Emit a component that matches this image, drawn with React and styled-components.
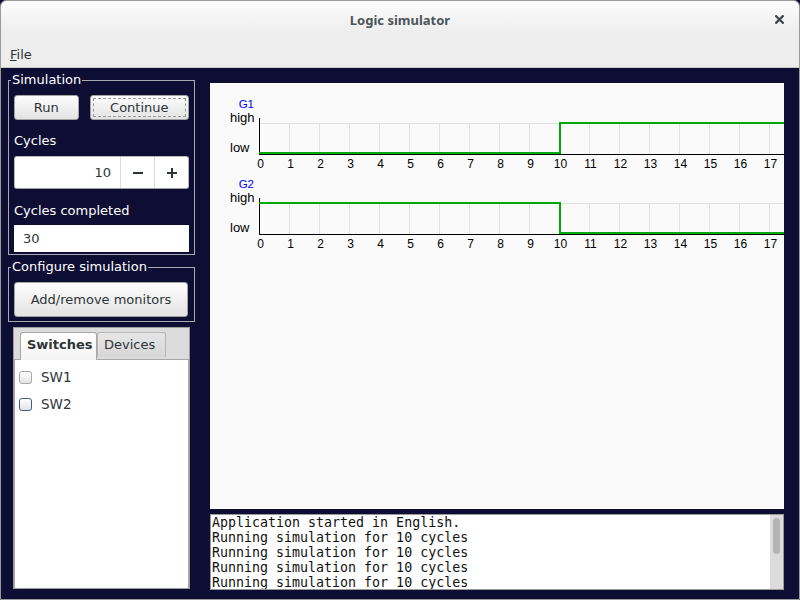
import styled, { createGlobalStyle } from 'styled-components';

const GlobalStyle = createGlobalStyle`
	html, body {
		margin: 0;
		padding: 0;
		background: #0e0e34;
	}
	body {
		font-family: "DejaVu Sans", sans-serif;
		font-size: 13px;
	}
`;

const Window = styled.div`
	width: 800px;
	height: 600px;
	box-sizing: border-box;
	border: 1px solid #9a9a9a;
	border-radius: 6px 6px 0 0;
	overflow: hidden;
	display: flex;
	flex-direction: column;
	background: #0e0e34;
`;

const TitleBar = styled.div`
	height: 35px;
	flex: none;
	display: flex;
	align-items: center;
	justify-content: center;
	position: relative;
	background: linear-gradient(#fcfcfc, #ededed 33px);
	font-family: "Noto Sans", sans-serif;
	font-weight: bold;
	font-size: 13px;
	color: #4b5459;
	padding-top: 2px;
	box-sizing: border-box;
`;

const CloseButton = styled.div`
	position: absolute;
	right: 15px;
	top: 14px;
	width: 9px;
	height: 9px;
	display: flex;
`;

const MenuBar = styled.div`
	height: 32px;
	flex: none;
	box-sizing: border-box;
	background: #ededed;
	border-bottom: 1px solid #cacaca;
	display: flex;
	align-items: center;
	padding: 6px 0 0 9px;
	color: #2e3436;
`;

const Main = styled.div`
	flex: 1;
	display: flex;
	min-height: 0;
`;

const LeftColumn = styled.div`
	width: 187px;
	margin-left: 7px;
	padding-top: 4px;
	display: flex;
	flex-direction: column;
`;

const Group = styled.fieldset`
	margin: ${(p) => p.$top || 0}px 0 0 0;
	padding: 7px 5px ${(p) => p.$bottom}px 5px;
	border: 1px solid #a9a9b2;
	width: 187px;
	box-sizing: border-box;
	min-width: 0;
	color: #fff;
	& legend {
		padding: 0 1px;
		margin-left: -3px;
		line-height: 16px;
		font-size: 13px;
	}
`;

const ButtonRow = styled.div`
	display: flex;
	gap: 11px;
`;

const Button = styled.button`
	width: ${(p) => p.$width}px;
	height: ${(p) => p.$height || 25}px;
	box-sizing: border-box;
	border: 1px solid #a4a4a4;
	border-radius: 3px;
	background: linear-gradient(#fdfdfd, #e3e3e3);
	font-family: "DejaVu Sans", sans-serif;
	font-size: 13px;
	color: #2e3436;
	padding: 0;
	outline: ${(p) => (p.$focused ? '1px dashed #9a9a9a' : 'none')};
	outline-offset: -4px;
`;

const Label = styled.div`
	margin-top: ${(p) => p.$top}px;
	line-height: 16px;
	color: #fff;
`;

const SpinBox = styled.div`
	margin-top: 7px;
	height: 33px;
	box-sizing: border-box;
	display: flex;
	background: #fff;
	border: 1px solid #b8b8b8;
	border-bottom-color: #a0a0a0;
	border-radius: 3px;
	color: #2e3436;
`;

const SpinValue = styled.div`
	flex: 1;
	text-align: right;
	padding-right: 9px;
	line-height: 31px;
`;

const SpinButton = styled.div`
	width: 33px;
	border-left: 1px solid #dcdcdc;
	display: flex;
	align-items: center;
	justify-content: center;
`;

const Entry = styled.div`
	margin-top: 6px;
	height: 27px;
	background: #fff;
	color: #2e3436;
	line-height: 27px;
	padding-left: 9px;
`;

const Notebook = styled.div`
	margin: 5px 0 0 5px;
	width: 177px;
	height: 262px;
	box-sizing: border-box;
	border: 1px solid #9c9c9c;
	background: #dcdcdc;
	display: flex;
	flex-direction: column;
`;

const TabBar = styled.div`
	height: 31px;
	box-sizing: border-box;
	padding: 4px 0 0 6px;
	display: flex;
	align-items: flex-start;
`;

const Tab = styled.div`
	width: ${(p) => p.$width}px;
	height: ${(p) => (p.$active ? 28 : 25)}px;
	box-sizing: border-box;
	border: 1px solid ${(p) => (p.$active ? '#a6a6a6' : '#b6b6b6')};
	border-bottom: none;
	border-radius: 3px 3px 0 0;
	background: ${(p) => (p.$active ? 'linear-gradient(#ffffff, #f4f4f4)' : 'linear-gradient(#e6e6e6, #d6d6d6)')};
	font-weight: ${(p) => (p.$active ? 'bold' : 'normal')};
	color: #2e3436;
	line-height: 24px;
	padding-left: 6px;
	position: relative;
	z-index: 1;
`;

const Panel = styled.div`
	flex: 1;
	background: #fff;
	border: 1px solid #a6a6a6;
	border-bottom: none;
	padding: 3px 0 0 4px;
`;

const CheckRow = styled.div`
	height: 27px;
	display: flex;
	align-items: center;
	gap: 9px;
	color: #2e3436;
	font-size: 13.5px;
`;

const Check = styled.span`
	width: 13px;
	height: 13px;
	box-sizing: border-box;
	border: 1px solid ${(p) => (p.$focused ? '#3a6187' : '#a8a8a8')};
	border-radius: 3px;
	background: linear-gradient(#ffffff, #e4e4e4);
	margin-top: 1px;
`;

const RightColumn = styled.div`
	width: 574px;
	margin-left: 15px;
	padding-top: 15px;
	display: flex;
	flex-direction: column;
	gap: 5px;
`;

const Canvas = styled.div`
	height: 426px;
	background: #fafafa;
	overflow: hidden;
	& svg {
		display: block;
	}
`;

const Console = styled.div`
	height: 76px;
	box-sizing: border-box;
	border: 1px solid #9a9a9a;
	background: #fff;
	display: flex;
`;

const ConsoleText = styled.div`
	flex: 1;
	overflow: hidden;
	font-family: "DejaVu Sans Mono", monospace;
	font-size: 13.3px;
	line-height: 15px;
	color: #111;
	white-space: pre;
	padding-left: 1px;
`;

const ScrollTrack = styled.div`
	width: 13px;
	background: #dcdcdc;
	padding: 3px 3px 0 3px;
	box-sizing: border-box;
`;

const ScrollThumb = styled.div`
	height: 36px;
	border-radius: 4px;
	background: #b4b4b4;
`;

const STEP = 30;
const X0 = 49.5;
const WIDTH = 574;

const traces = [
	{ name: 'G1', path: 'M49,70 H350 V40 H574' },
	{ name: 'G2', path: 'M49,40 H350 V70 H574' },
];

const TraceChart = () => (
	<svg width={WIDTH} height={426} fontFamily="Liberation Sans, Arial, sans-serif">
		{traces.map((t, i) => (
			<g key={t.name} transform={`translate(0 ${i * 80})`}>
				{Array.from({ length: 17 }, (_, k) => (
					<line
						key={k}
						x1={X0 + STEP * (k + 1)}
						x2={X0 + STEP * (k + 1)}
						y1={40}
						y2={71}
						stroke="#e2e2e2"
						strokeWidth="1"
					/>
				))}
				<line x1={X0} x2={WIDTH} y1={40.5} y2={40.5} stroke="#e2e2e2" strokeWidth="1" />
				<line x1={X0} x2={X0} y1={35} y2={72} stroke="#000" strokeWidth="1" />
				<line x1={49} x2={WIDTH} y1={71.5} y2={71.5} stroke="#000" strokeWidth="1" />
				<path d={t.path} fill="none" stroke="#00aa00" strokeWidth="2" />
				<text x={44} y={24.5} fontSize="11.5" fill="#0000ff" textAnchor="end">
					{t.name}
				</text>
				<text x={20} y={38.5} fontSize="13" fill="#000">
					high
				</text>
				<text x={20} y={68.5} fontSize="13" fill="#000">
					low
				</text>
				{Array.from({ length: 18 }, (_, k) => (
					<text key={k} x={X0 + 1 + STEP * k} y={84.5} fontSize="12" fill="#000" textAnchor="middle">
						{k}
					</text>
				))}
			</g>
		))}
	</svg>
);

const Minus = () => (
	<svg width="10" height="10" viewBox="0 0 10 10">
		<rect x="0" y="4" width="10" height="2" fill="#2e3436" />
	</svg>
);

const Plus = () => (
	<svg width="10" height="10" viewBox="0 0 10 10">
		<rect x="0" y="4" width="10" height="2" fill="#2e3436" />
		<rect x="4" y="0" width="2" height="10" fill="#2e3436" />
	</svg>
);

const logLines = [
	'Application started in English.',
	'Running simulation for 10 cycles',
	'Running simulation for 10 cycles',
	'Running simulation for 10 cycles',
	'Running simulation for 10 cycles',
];

export default function App() {
	return (
		<>
			<GlobalStyle />
			<Window>
				<TitleBar>
					Logic simulator
					<CloseButton>
						<svg width="9" height="9" viewBox="0 0 9 9">
							<path d="M1.2 1.2 L7.8 7.8 M7.8 1.2 L1.2 7.8" stroke="#3e4b52" strokeWidth="2.3" strokeLinecap="square" />
						</svg>
					</CloseButton>
				</TitleBar>
				<MenuBar>
					<span>
						<u>F</u>ile
					</span>
				</MenuBar>
				<Main>
					<LeftColumn>
						<Group $bottom={2}>
							<legend>Simulation</legend>
							<ButtonRow>
								<Button $width={65}>Run</Button>
								<Button $width={100} $focused>
									Continue
								</Button>
							</ButtonRow>
							<Label $top={13}>Cycles</Label>
							<SpinBox>
								<SpinValue>10</SpinValue>
								<SpinButton>
									<Minus />
								</SpinButton>
								<SpinButton>
									<Plus />
								</SpinButton>
							</SpinBox>
							<Label $top={14}>Cycles completed</Label>
							<Entry>30</Entry>
						</Group>
						<Group $top={4} $bottom={4}>
							<legend>Configure simulation</legend>
							<Button $width={174} $height={35}>
								Add/remove monitors
							</Button>
						</Group>
						<Notebook>
							<TabBar>
								<Tab $active $width={77}>
									Switches
								</Tab>
								<Tab $width={69}>Devices</Tab>
							</TabBar>
							<Panel>
								<CheckRow>
									<Check />
									SW1
								</CheckRow>
								<CheckRow>
									<Check $focused />
									SW2
								</CheckRow>
							</Panel>
						</Notebook>
					</LeftColumn>
					<RightColumn>
						<Canvas>
							<TraceChart />
						</Canvas>
						<Console>
							<ConsoleText>{logLines.join('\n')}</ConsoleText>
							<ScrollTrack>
								<ScrollThumb />
							</ScrollTrack>
						</Console>
					</RightColumn>
				</Main>
			</Window>
		</>
	);
}
